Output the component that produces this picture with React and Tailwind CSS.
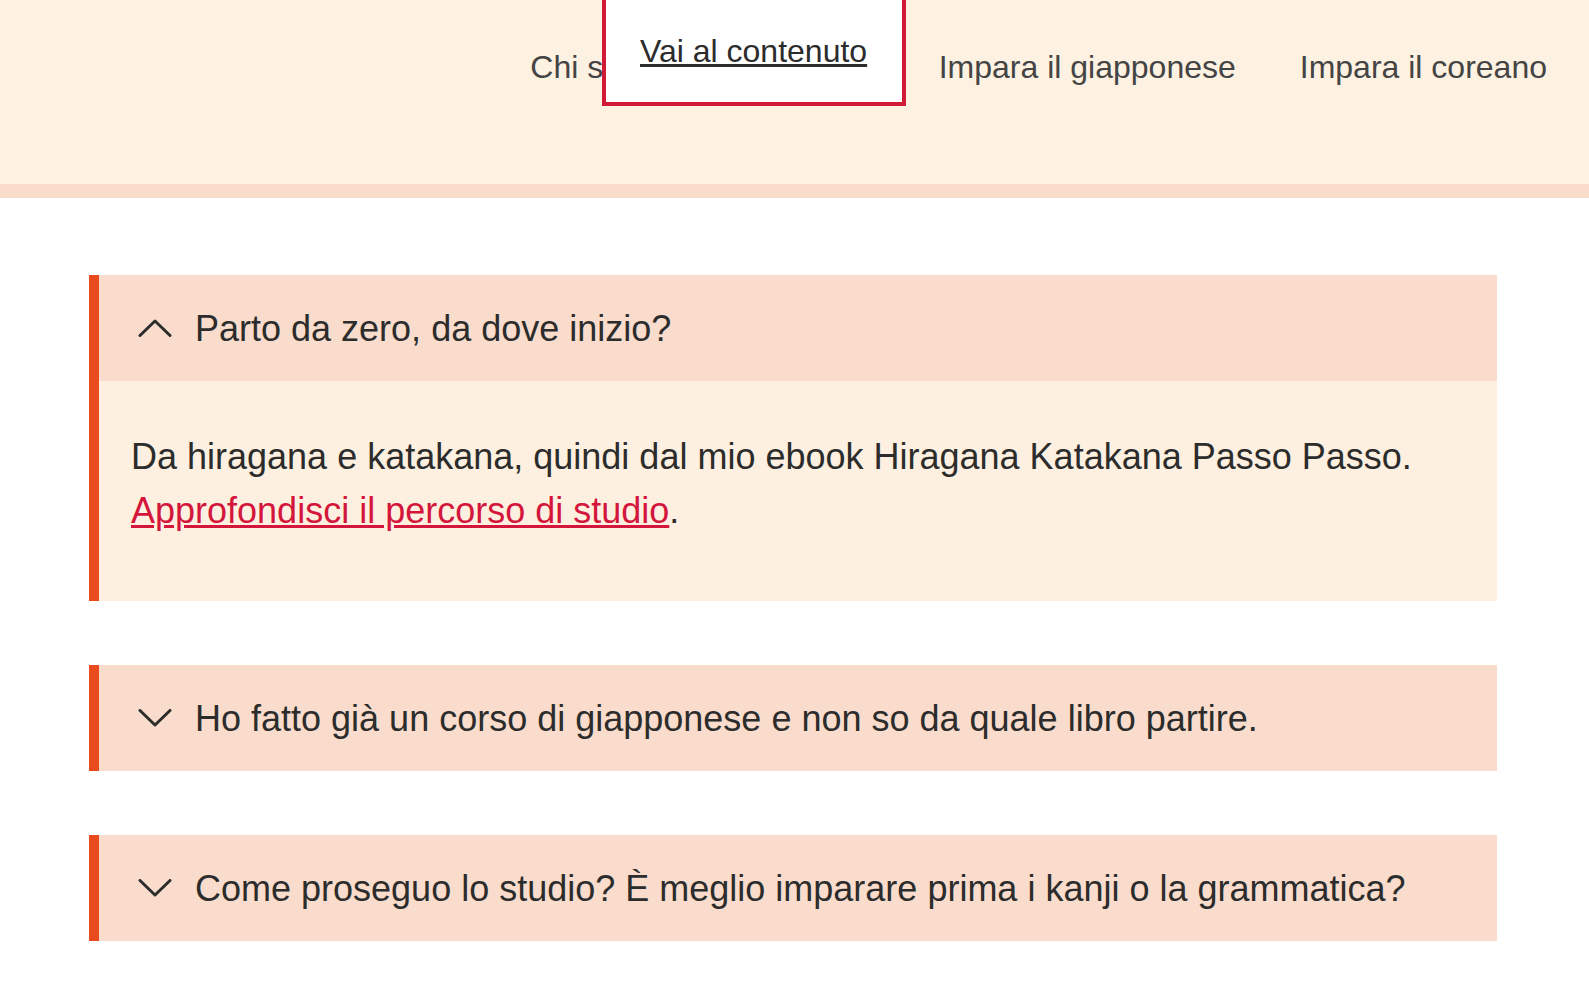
import { useState } from 'react'

const NAV = ['Chi siamo', 'I miei libri', 'Impara il giapponese', 'Impara il coreano']

const FAQ = [
  {
    q: 'Parto da zero, da dove inizio?',
    a: 'Da hiragana e katakana, quindi dal mio ebook Hiragana Katakana Passo Passo.',
    link: 'Approfondisci il percorso di studio',
  },
  { q: 'Ho fatto già un corso di giapponese e non so da quale libro partire.' },
  { q: 'Come proseguo lo studio? È meglio imparare prima i kanji o la grammatica?' },
]

function Chevron({ up }) {
  return (
    <svg width="34" height="18" viewBox="0 0 34 18" fill="none" className="shrink-0" aria-hidden="true">
      <path
        d={up ? 'M2 16.5L17 2L32 16.5' : 'M2 1.5L17 16L32 1.5'}
        stroke="#2d2d2d"
        strokeWidth="3"
        strokeLinecap="round"
        strokeLinejoin="round"
      />
    </svg>
  )
}

function FaqItem({ item, open, onToggle }) {
  return (
    <div className="border-l-[10px] border-[#e94b1e]">
      <button
        type="button"
        onClick={onToggle}
        className="flex h-[106px] w-full items-center gap-[23px] bg-[#f9dccb] pl-[39px] text-left text-[36px] leading-[52px] text-[#2c2c2c]"
      >
        <Chevron up={open} />
        <span className="mt-[2px]">{item.q}</span>
      </button>
      {open && item.a && (
        <div className="bg-[#fdf0e0] pt-[49px] pb-[63px] pl-[32px] pr-[40px] text-[36px] leading-[54px] text-[#2c2c2c]">
          <p>
            {item.a}{' '}
            <a href="#" className="text-[#d4163c] underline">{item.link}</a>.
          </p>
        </div>
      )}
    </div>
  )
}

export default function App() {
  const [openIdx, setOpenIdx] = useState(0)

  return (
    <div className="relative min-h-screen overflow-hidden bg-white font-['Liberation_Sans',Arial,sans-serif]">
      {/* Header */}
      <header className="h-[198px] border-b-[14px] border-[#f9dcc9] bg-[#fdf1e1]">
        <nav className="flex justify-end gap-16 pt-[43px] pr-[42px] text-[32px] leading-[48px] text-[#444]">
          {NAV.map((n, i) => (
            <a key={n} href="#" className={i === 1 ? 'whitespace-nowrap pr-[3px]' : 'whitespace-nowrap'}>{n}</a>
          ))}
        </nav>
      </header>

      {/* Skip link, focused */}
      <a
        href="#content"
        className="absolute top-[-10px] left-[602px] h-[116px] w-[304px] border-4 border-[#d11b36] bg-white pt-[33px] pl-[34px] text-[32px] leading-[48px] text-[#2c2c2c] underline"
      >
        Vai al contenuto
      </a>

      {/* FAQ */}
      <main id="content" className="ml-[89px] flex w-[1408px] flex-col gap-16 pt-[77px] pb-16">
        {FAQ.map((item, i) => (
          <FaqItem
            key={item.q}
            item={item}
            open={openIdx === i}
            onToggle={() => setOpenIdx(openIdx === i ? -1 : i)}
          />
        ))}
      </main>
    </div>
  )
}
